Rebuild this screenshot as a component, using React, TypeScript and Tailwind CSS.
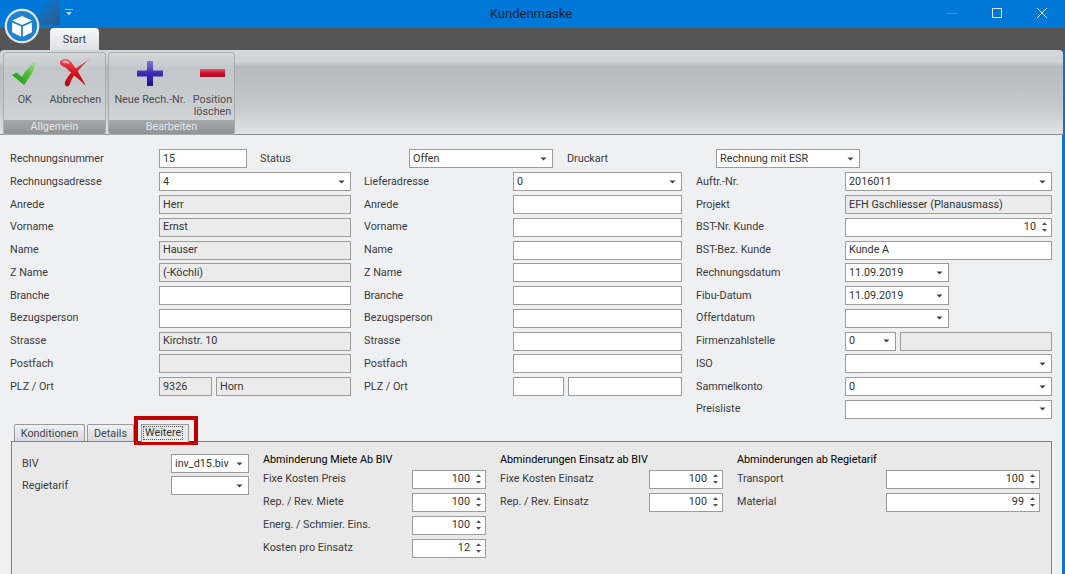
import type { ReactNode } from "react";

const font = "[font-family:Roboto,Arial,sans-serif]";

function Caret() {
  return (
    <svg width="7" height="4" viewBox="0 0 7 4" className="shrink-0">
      <path d="M0.5 0.5h6L3.5 3.5z" fill="#404040" />
    </svg>
  );
}

function Box({ w, children, className = "" }: { w: string; children?: ReactNode; className?: string }) {
  return (
    <div className={`${w} shrink-0 h-[19px] flex items-center px-[3px] border border-[#9c9c9c] bg-white text-[#333] ${className}`}>
      {children}
    </div>
  );
}

function Text({ w, value }: { w: string; value?: string }) {
  return <Box w={w}>{value}</Box>;
}

function ReadOnly({ w, value }: { w: string; value?: string }) {
  return <Box w={w} className="!bg-[#ebebeb]">{value}</Box>;
}

function Combo({ w, value }: { w: string; value?: string }) {
  return (
    <Box w={w} className="justify-between pr-[5px]">
      <span>{value}</span>
      <Caret />
    </Box>
  );
}

function Spin({ w, value }: { w: string; value: string }) {
  return (
    <Box w={w} className="justify-end !pr-[3px]">
      <span>{value}</span>
      <svg width="7" height="12" viewBox="0 0 7 12" className="ml-[5px] shrink-0">
        <path d="M1 4h5L3.5 1.2zM1 8h5L3.5 10.8z" fill="#505050" />
      </svg>
    </Box>
  );
}

function Label({ w, children }: { w: string; children: ReactNode }) {
  return <div className={`${w} shrink-0 text-[#3a3a3a]`}>{children}</div>;
}

function FormRow({ label, children, w }: { label?: string; children?: ReactNode; w: string }) {
  return (
    <div className={`${w} h-[22.75px] flex items-center`}>
      <Label w="w-[149px]">{label}</Label>
      {children}
    </div>
  );
}

function Logo() {
  return (
    <svg width="36" height="36" viewBox="0 0 40 40">
      <circle cx="20" cy="20" r="18" fill="#1f82cc" stroke="#dfe6ec" strokeWidth="2.5" />
      <path d="M20 9l11 5-11 5-11-5z" fill="#fff" />
      <path d="M9 16l10 4.6V32L9 27z" fill="#fff" />
      <path d="M31 16l-10 4.6V32l10-5z" fill="#fff" />
    </svg>
  );
}

function RibbonButton({ w, icon, label }: { w: string; icon: ReactNode; label: ReactNode }) {
  return (
    <div className={`${w} flex flex-col items-center`}>
      <div className="h-[34px] flex items-center justify-center">{icon}</div>
      <div className="mt-[4px] text-center leading-[12px] text-[#4d4d4d]">{label}</div>
    </div>
  );
}

function Group({ w, title, children }: { w: string; title: string; children: ReactNode }) {
  return (
    <div className={`${w} h-[83px] flex flex-col rounded-[3px] border border-[#a9adb2] bg-[linear-gradient(#d6d8da,#c3c6cb_20%,#c9ccd0_60%,#d8dadc)] overflow-hidden`}>
      <div className="flex-1 flex pt-[3px]">{children}</div>
      <div className="h-[14px] leading-[14px] text-center text-[#e4e6e8] bg-[linear-gradient(#a6a8ab,#909396)]">{title}</div>
    </div>
  );
}

const IconCheck = (
  <svg width="26" height="26" viewBox="0 0 26 26">
    <defs>
      <linearGradient id="chk" x1="1" y1="0" x2="0" y2="1">
        <stop offset="0" stopColor="#c9dcc0" />
        <stop offset="0.45" stopColor="#4fbe32" />
        <stop offset="1" stopColor="#14951f" />
      </linearGradient>
    </defs>
    <path d="M0 15l5-2.500 5 4.500C13 11 18 5 25 0c-1 8-7 17-13 25z" fill="url(#chk)" />
  </svg>
);

const IconCross = (
  <svg width="32" height="30" viewBox="0 0 32 30">
    <defs>
      <linearGradient id="crs" x1="0" y1="0" x2="0" y2="1">
        <stop offset="0" stopColor="#e8555b" />
        <stop offset="0.5" stopColor="#d9141c" />
        <stop offset="1" stopColor="#b00d14" />
      </linearGradient>
    </defs>
    <path d="M1 4C3 0 9 0 12 4c5 6 11 16 15 24-6-6-15-13-20-18C4 8 0 7 1 4z" fill="url(#crs)" />
    <path d="M31 1c-8 5-16 10-20 15-3 4-6 8-5 11 1 2 4 2 5-1 1-5 4-9 8-13 4-5 8-9 12-12z" fill="url(#crs)" />
    <path d="M3 4c2-2 5-2 7 0 1 2-1 2-3 1-1 0-3 0-4-1z" fill="#f6a5a8" />
  </svg>
);

const IconPlus = (
  <svg width="26" height="25" viewBox="0 0 26 25">
    <defs>
      <linearGradient id="pls" x1="0" y1="0" x2="0" y2="1">
        <stop offset="0" stopColor="#8175d8" />
        <stop offset="0.5" stopColor="#3b2bb5" />
        <stop offset="1" stopColor="#1d1490" />
      </linearGradient>
    </defs>
    <path d="M10 0h6v9.500h10v6H16V25h-6v-9.500H0v-6h10z" fill="url(#pls)" />
  </svg>
);

const IconMinus = (
  <svg width="25" height="8" viewBox="0 0 25 8">
    <defs>
      <linearGradient id="mns" x1="0" y1="0" x2="0" y2="1">
        <stop offset="0" stopColor="#e0606c" />
        <stop offset="0.5" stopColor="#d01030" />
        <stop offset="1" stopColor="#a00c20" />
      </linearGradient>
    </defs>
    <rect width="25" height="8" fill="url(#mns)" />
  </svg>
);

const rowsA: [string, ReactNode][] = [
  ["Rechnungsadresse", <Combo w="w-[192px]" value="4" />],
  ["Anrede", <ReadOnly w="w-[192px]" value="Herr" />],
  ["Vorname", <ReadOnly w="w-[192px]" value="Ernst" />],
  ["Name", <ReadOnly w="w-[192px]" value="Hauser" />],
  ["Z Name", <ReadOnly w="w-[192px]" value="(-Köchli)" />],
  ["Branche", <Text w="w-[192px]" />],
  ["Bezugsperson", <Text w="w-[192px]" />],
  ["Strasse", <ReadOnly w="w-[192px]" value="Kirchstr. 10" />],
  ["Postfach", <ReadOnly w="w-[192px]" />],
  [
    "PLZ / Ort",
    <div className="flex gap-[4px]">
      <ReadOnly w="w-[53px]" value="9326" />
      <ReadOnly w="w-[135px]" value="Horn" />
    </div>,
  ],
];

const rowsB: [string, ReactNode][] = [
  ["Lieferadresse", <Combo w="w-[169px]" value="0" />],
  ["Anrede", <Text w="w-[169px]" />],
  ["Vorname", <Text w="w-[169px]" />],
  ["Name", <Text w="w-[169px]" />],
  ["Z Name", <Text w="w-[169px]" />],
  ["Branche", <Text w="w-[169px]" />],
  ["Bezugsperson", <Text w="w-[169px]" />],
  ["Strasse", <Text w="w-[169px]" />],
  ["Postfach", <Text w="w-[169px]" />],
  [
    "PLZ / Ort",
    <div className="flex gap-[4px]">
      <Text w="w-[51px]" />
      <Text w="w-[114px]" />
    </div>,
  ],
];

const rowsC: [string, ReactNode][] = [
  ["Auftr.-Nr.", <Combo w="w-[207px]" value="2016011" />],
  ["Projekt", <ReadOnly w="w-[207px]" value="EFH Gschliesser (Planausmass)" />],
  ["BST-Nr. Kunde", <Spin w="w-[207px]" value="10" />],
  ["BST-Bez. Kunde", <Text w="w-[207px]" value="Kunde A" />],
  ["Rechnungsdatum", <Combo w="w-[104px]" value="11.09.2019" />],
  ["Fibu-Datum", <Combo w="w-[104px]" value="11.09.2019" />],
  ["Offertdatum", <Combo w="w-[104px]" />],
  [
    "Firmenzahlstelle",
    <div className="flex gap-[4px]">
      <Combo w="w-[51px]" value="0" />
      <ReadOnly w="w-[152px]" />
    </div>,
  ],
  ["ISO", <Combo w="w-[207px]" />],
  ["Sammelkonto", <Combo w="w-[207px]" value="0" />],
  ["Preisliste", <Combo w="w-[207px]" />],
];

function SubRow({ label, labelW, spinW, value }: { label: string; labelW: string; spinW: string; value: string }) {
  return (
    <div className="h-[23px] flex items-center">
      <Label w={labelW}>{label}</Label>
      <Spin w={spinW} value={value} />
    </div>
  );
}

export default function App() {
  return (
    <div className={`relative w-[1065px] h-[574px] overflow-hidden flex flex-col bg-[#0078d7] text-[10.8px] leading-[14px] ${font}`}>
      <div className="relative h-[28px] shrink-0 bg-[#0078d7] flex items-center justify-center pr-[3px] text-[13px] text-[#10243a]">
        Kundenmaske
        <div className="absolute left-[37px] top-0 w-[23px] h-[25px] bg-[linear-gradient(135deg,#0078d7_15%,#2068a8_60%,#1c5f9c)]" />
        <div className="absolute left-[65px] top-[9px] w-[8px] h-[7px] border-t border-[#9ec3e3]">
          <div className="mt-[2px]">
            <svg width="8" height="4" viewBox="0 0 8 4">
              <path d="M1 0h6L4 3.5z" fill="#b7d2ea" />
            </svg>
          </div>
        </div>
        <div className="absolute right-[108px] top-[12.5px] w-[10px] h-px bg-[#3f9ae3]" />
        <div className="absolute right-[63px] top-[8px] w-[10px] h-[10px] border border-[#dcebf8]" />
        <svg className="absolute right-[18px] top-[8px]" width="10" height="10" viewBox="0 0 10 10">
          <path d="M0 0l10 10M10 0L0 10" stroke="#dcebf8" strokeWidth="1" />
        </svg>
      </div>

      <div className="relative h-[22px] shrink-0 bg-[#555555] pl-[50px] pr-[2px] flex items-end">
        <div className="h-[22px] w-[49px] rounded-t-[4px] bg-[linear-gradient(#f6f7f8,#dfe1e4)] text-center leading-[23px] text-[#333]">
          Start
        </div>
      </div>
      <div className="absolute left-[4px] top-[8px]">
        <Logo />
      </div>

      <div className="shrink-0 mr-[2px] bg-[#555555]">
        <div className="h-[85px] rounded-t-[4px] flex gap-[2px] pl-[3px] pt-[2px] border-b border-[#8f9295] bg-[linear-gradient(#d6d8da,#d0d2d5_14%,#b6bac1_20%,#c6cacd_70%,#e0e4e5)]">
          <Group w="w-[103px]" title="Allgemein">
            <RibbonButton w="w-[42px]" icon={IconCheck} label="OK" />
            <RibbonButton w="w-[60px]" icon={IconCross} label="Abbrechen" />
          </Group>
          <Group w="w-[127px]" title="Bearbeiten">
            <RibbonButton w="w-[82px]" icon={IconPlus} label="Neue Rech.-Nr." />
            <RibbonButton w="w-[43px]" icon={IconMinus} label={<>Position<br />löschen</>} />
          </Group>
        </div>
      </div>

      <div className="relative flex-1 mr-[3px] bg-[#eff0f2] pl-[10px] pt-[14px]">
        <div className="flex items-center h-[19px]">
          <Label w="w-[149px]">Rechnungsnummer</Label>
          <Text w="w-[88px]" value="15" />
          <div className="ml-[13px]">
            <Label w="w-[149px]">Status</Label>
          </div>
          <Combo w="w-[144px]" value="Offen" />
          <div className="ml-[14px]">
            <Label w="w-[149px]">Druckart</Label>
          </div>
          <Combo w="w-[144px]" value="Rechnung mit ESR" />
        </div>

        <div className="flex mt-[2.5px]">
          <div className="w-[354px]">
            {rowsA.map(([label, field]) => (
              <FormRow key={label} w="w-[354px]" label={label}>{field}</FormRow>
            ))}
          </div>
          <div className="w-[332px]">
            {rowsB.map(([label, field]) => (
              <FormRow key={label} w="w-[332px]" label={label}>{field}</FormRow>
            ))}
          </div>
          <div className="w-[356px]">
            {rowsC.map(([label, field]) => (
              <FormRow key={label} w="w-[356px]" label={label}>{field}</FormRow>
            ))}
          </div>
        </div>

        <div className="mt-[3px] ml-[4px] flex items-end h-[17px] gap-[2px]">
          <div className="w-[71px] h-[17px] text-center leading-[17px] border border-b-0 border-[#9a9a9a] rounded-t-[2px] bg-[linear-gradient(#f0f2f5,#d5d9de)] text-[#444]">Konditionen</div>
          <div className="w-[47px] h-[17px] text-center leading-[17px] border border-b-0 border-[#9a9a9a] rounded-t-[2px] bg-[linear-gradient(#f0f2f5,#d5d9de)] text-[#444]">Details</div>
          <div className="relative z-10 ml-[5px] w-[48px] h-[18px] -mb-px flex items-center pl-px border border-b-0 border-[#9a9a9a] bg-[#e9e9e9] text-[#333]">
            <span className="border border-dotted border-[#555] leading-[12px] px-px">Weitere</span>
          </div>
        </div>

        <div className="w-[1041px] ml-px h-[140px] border border-b-0 border-[#808080] bg-[#e9e9e9] flex pl-[10px] pt-[11px]">
          <div className="w-[241px] shrink-0">
            <div className="h-[22px] flex items-center">
              <Label w="w-[149px]">BIV</Label>
              <Combo w="w-[78px]" value="inv_d15.biv" />
            </div>
            <div className="h-[22px] flex items-center">
              <Label w="w-[149px]">Regietarif</Label>
              <Combo w="w-[78px]" />
            </div>
          </div>
          <div className="w-[237px] shrink-0">
            <div className="h-[15px]">Abminderung Miete Ab BIV</div>
            <SubRow label="Fixe Kosten Preis" labelW="w-[149px]" spinW="w-[74px]" value="100" />
            <SubRow label="Rep. / Rev. Miete" labelW="w-[149px]" spinW="w-[74px]" value="100" />
            <SubRow label="Energ. / Schmier. Eins." labelW="w-[149px]" spinW="w-[74px]" value="100" />
            <SubRow label="Kosten pro Einsatz" labelW="w-[149px]" spinW="w-[74px]" value="12" />
          </div>
          <div className="w-[237px] shrink-0">
            <div className="h-[15px]">Abminderungen Einsatz ab BIV</div>
            <SubRow label="Fixe Kosten Einsatz" labelW="w-[149px]" spinW="w-[74px]" value="100" />
            <SubRow label="Rep. / Rev. Einsatz" labelW="w-[149px]" spinW="w-[74px]" value="100" />
          </div>
          <div className="w-[303px] shrink-0">
            <div className="h-[15px]">Abminderungen ab Regietarif</div>
            <SubRow label="Transport" labelW="w-[149px]" spinW="w-[154px]" value="100" />
            <SubRow label="Material" labelW="w-[149px]" spinW="w-[154px]" value="99" />
          </div>
        </div>

        <div className="absolute left-[134px] top-[281px] w-[64px] h-[29px] border-[4px] border-[#c00000]" />
      </div>
    </div>
  );
}
